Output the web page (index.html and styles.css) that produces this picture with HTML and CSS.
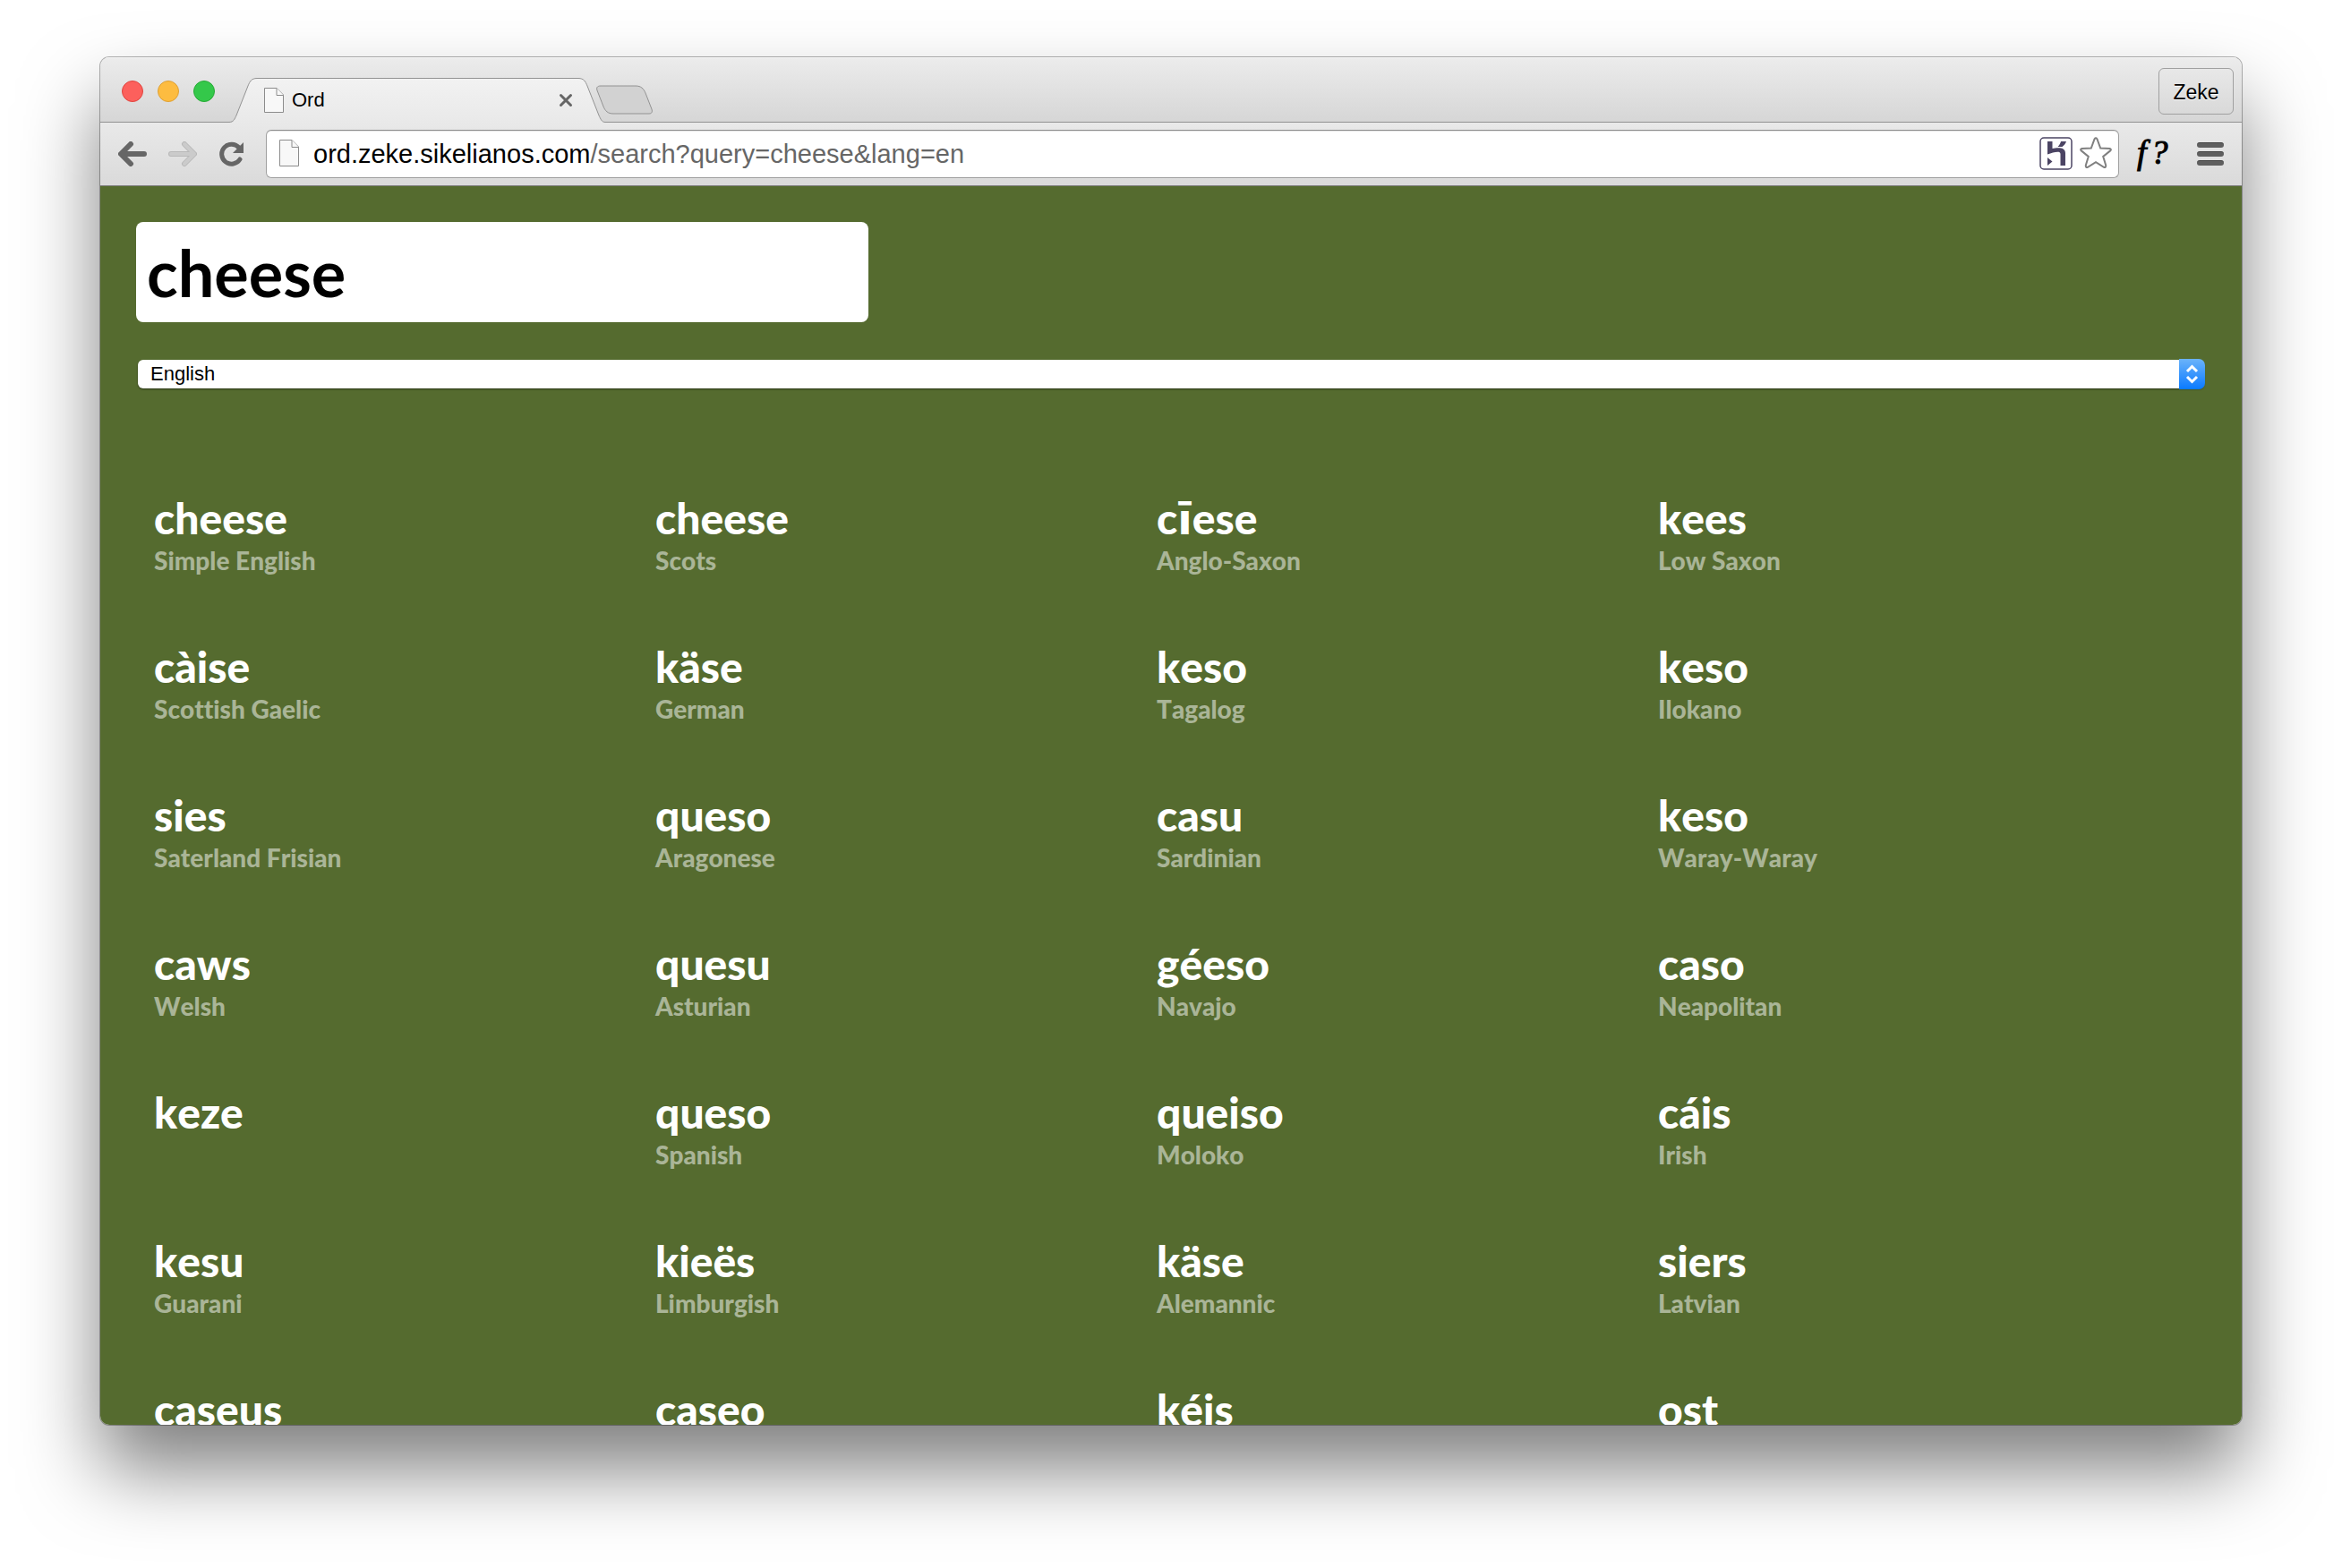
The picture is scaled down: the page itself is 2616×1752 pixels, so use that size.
FILE: index.html
```html
<!DOCTYPE html>
<html lang="en">
<head>
<meta charset="utf-8">
<title>Ord</title>
<link rel="stylesheet" href="styles.css">
</head>
<body>
<div class="window">
  <header class="chrome">
    <div class="tabstrip">
      <div class="lights">
        <button class="light light-close" aria-label="Close window"></button>
        <button class="light light-minimize" aria-label="Minimize window"></button>
        <button class="light light-zoom" aria-label="Zoom window"></button>
      </div>
      <div class="tab">
        <svg class="tab-shape" viewBox="0 0 420 50" aria-hidden="true">
          <defs>
            <linearGradient id="tab-fill" x1="0" y1="0" x2="0" y2="1">
              <stop offset="0" stop-color="#f2f2f2"/>
              <stop offset="1" stop-color="#e9e9e9"/>
            </linearGradient>
          </defs>
          <path fill="url(#tab-fill)" d="M0 50V49.500C5 49.500 6 46 8 42L21 9C23 4 25 .5 31 .5H390C396 .5 398 4 400 9L413 42C415 46 416 49.500 420 49.500V50Z"/>
          <path fill="none" stroke="#929292" d="M0 49.500C5 49.500 6 46 8 42L21 9C23 4 25 .5 31 .5H390C396 .5 398 4 400 9L413 42C415 46 416 49.500 420 49.500"/>
        </svg>
        <svg class="page-icon" viewBox="0 0 22 28" aria-hidden="true"><path d="M.5 .5H14L21.500 8V27.500H.5Z"/><path d="M14 .5V8.500H21.500"/></svg>
        <span class="tab-title">Ord</span>
        <button class="tab-close" aria-label="Close tab"><svg viewBox="0 0 16 16"><path d="M2.500 2.500L13.500 13.500M13.500 2.500L2.500 13.500"/></svg></button>
      </div>
      <button class="new-tab" aria-label="New tab"><svg viewBox="0 0 66 34"><path d="M6 1H45C51 1 54 4 56 9L63 27C64 30 63 32 60 32H20C14 32 11 29 9 24L2 6C1 3 2 1 6 1Z"/></svg></button>
      <button class="profile">Zeke</button>
    </div>
    <div class="toolbar">
      <button class="nav" aria-label="Back"><svg viewBox="0 0 32 28"><path d="M14 3L3 14L14 25M4 14H29" stroke="#666"/></svg></button>
      <button class="nav" aria-label="Forward" disabled><svg viewBox="0 0 32 28"><path d="M18 3L29 14L18 25M28 14H3" stroke="#b9b9b9"/><path d="M18 3L29 14L18 25M28 14H3" stroke="#cbcbcb" stroke-width="4"/></svg></button>
      <button class="nav nav-reload" aria-label="Reload"><svg viewBox="0 0 28 28"><path d="M23 20A11 11 0 1 1 22 7" stroke="#666" stroke-width="5"/><path d="M27 1V13H15Z" fill="#666" stroke="none"/></svg></button>
      <div class="omnibox">
        <svg class="page-icon page-icon-tall" viewBox="0 0 22 30" aria-hidden="true"><path d="M.5 .5H14L21.500 8V29.500H.5Z"/><path d="M14 .5V8.500H21.500"/></svg>
        <a class="url" href="#">ord.zeke.sikelianos.com<span class="url-path">/search?query=cheese&amp;lang=en</span></a>
        <button class="box-button" aria-label="Heroku"><svg class="heroku" viewBox="0 0 37 37"><rect x="1" y="1" width="35" height="35" rx="4" fill="#fff" stroke="#4b4463" stroke-width="1.500"/><path fill="#4b4463" d="M9 5H14.500V13C19 12 29 10.500 29 18V32H23.500V19C23.500 15 16 17 9 19.500ZM9 23L14.500 27.500L9 32ZM24 5H30C29 8 27.500 9.500 25.500 11H20.500C22.500 9 23.500 7 24 5Z"/></svg></button>
        <button class="box-button" aria-label="Bookmark"><svg class="star" viewBox="0 0 36 36"><path d="M16.600 2.200Q18 .2 19.400 2.200L23.200 12.500L33.600 13Q35.800 13.700 34.200 15.400L26.200 21.900L29.200 31.800Q29.400 34.500 27 33.800L18 28.200L9 33.800Q6.600 34.500 6.800 31.800L9.800 21.900L1.800 15.400Q.2 13.700 2.400 13L12.800 12.500Z"/></svg></button>
      </div>
      <button class="extension" aria-label="WhatFont"><i>f</i><i>?</i></button>
      <button class="menu" aria-label="Menu"><span class="bar"></span><span class="bar"></span><span class="bar"></span></button>
    </div>
  </header>
  <main class="page">
    <form class="search">
      <input class="query" type="text" value="cheese" aria-label="Word">
      <div class="language">
        <select class="language-select" aria-label="Language"><option>English</option></select>
        <svg class="language-arrows" viewBox="0 0 29 34" aria-hidden="true"><path d="M9 14L14.500 8.500L20 14M9 20L14.500 25.500L20 20"/></svg>
      </div>
    </form>
    <ul class="words">
      <li><b>cheese</b><span>Simple English</span></li>
      <li><b>cheese</b><span>Scots</span></li>
      <li><b>c<i class="macron">ī</i>ese</b><span>Anglo-Saxon</span></li>
      <li><b>kees</b><span>Low Saxon</span></li>
      <li><b>càise</b><span>Scottish Gaelic</span></li>
      <li><b>käse</b><span>German</span></li>
      <li><b>keso</b><span>Tagalog</span></li>
      <li><b>keso</b><span>Ilokano</span></li>
      <li><b>sies</b><span>Saterland Frisian</span></li>
      <li><b>queso</b><span>Aragonese</span></li>
      <li><b>casu</b><span>Sardinian</span></li>
      <li><b>keso</b><span>Waray-Waray</span></li>
      <li><b>caws</b><span>Welsh</span></li>
      <li><b>quesu</b><span>Asturian</span></li>
      <li><b>géeso</b><span>Navajo</span></li>
      <li><b>caso</b><span>Neapolitan</span></li>
      <li><b>keze</b></li>
      <li><b>queso</b><span>Spanish</span></li>
      <li><b>queiso</b><span>Moloko</span></li>
      <li><b>cáis</b><span>Irish</span></li>
      <li><b>kesu</b><span>Guarani</span></li>
      <li><b>kieës</b><span>Limburgish</span></li>
      <li><b>käse</b><span>Alemannic</span></li>
      <li><b>siers</b><span>Latvian</span></li>
      <li><b>caseus</b></li>
      <li><b>caseo</b></li>
      <li><b>kéis</b></li>
      <li><b>ost</b></li>
    </ul>
  </main>
</div>
</body>
</html>
```
FILE: styles.css
```css
* { box-sizing: border-box; }

body {
  display: flex;
  flex-direction: column;
  height: 100vh;
  margin: 0;
  padding: 64px 112px 160px;
  background: #fff;
  font-family: "Liberation Sans", Arial, sans-serif;
}

button {
  margin: 0;
  padding: 0;
  border: 0;
  background: none;
  color: inherit;
  font: inherit;
}

svg { display: block; }

.window {
  display: flex;
  flex: 1;
  flex-direction: column;
  min-height: 0;
  overflow: hidden;
  border-radius: 10px;
  box-shadow: 0 0 0 1px rgba(0, 0, 0, .3), 0 50px 86px rgba(0, 0, 0, .5);
}

/* Browser frame */
.tabstrip {
  display: flex;
  align-items: flex-end;
  height: 73px;
  padding-right: 9px;
  border-bottom: 1px solid #929292;
  background: linear-gradient(#ececec, #d6d6d6);
  box-shadow: inset 0 1px #f6f6f6;
}

.lights {
  display: flex;
  align-self: center;
  gap: 16px;
  width: 144px;
  padding: 4px 0 0 24px;
}

.light {
  width: 24px;
  height: 24px;
  border: 1px solid #e0443e;
  border-radius: 50%;
  background: #fc605c;
}
.light-minimize { border-color: #dea034; background: #fdbc40; }
.light-zoom { border-color: #27aa35; background: #34c84a; }

.tab {
  position: relative;
  display: flex;
  align-items: center;
  gap: 9px;
  width: 420px;
  height: 50px;
  margin-bottom: -1px;
  padding: 0 36px 0 39px;
}
.tab-shape { position: absolute; inset: 0; width: 100%; height: 100%; }
.page-icon {
  position: relative;
  width: 22px;
  height: 28px;
  fill: #f8f8f8;
  stroke: #8c8c8c;
}
.page-icon-tall { height: 30px; }
.tab-title { position: relative; flex: 1; font-size: 22px; }
.tab-close { position: relative; width: 16px; height: 16px; }
.tab-close path { stroke: #666; stroke-width: 3; stroke-linecap: round; }

.new-tab { width: 66px; height: 34px; margin: 0 auto 7px -11px; position: relative; }
.new-tab path { fill: #d2d2d2; stroke: #929292; }

.profile {
  width: 84px;
  height: 52px;
  margin-bottom: 8px;
  padding-top: 2px;
  border: 1px solid #a0a0a0;
  border-radius: 6px;
  font-size: 23px;
  text-shadow: 0 1px #fff;
}

.toolbar {
  display: flex;
  align-items: center;
  height: 71px;
  padding: 0 20px;
  border-bottom: 1px solid #808080;
  background: linear-gradient(#e9e9e9, #dadada);
}
.nav { width: 32px; height: 28px; margin-right: 24px; }
.nav svg { width: 100%; height: 100%; fill: none; stroke-width: 6; stroke-linecap: round; stroke-linejoin: round; }
.nav-reload { width: 28px; margin-left: 1px; }

.omnibox {
  display: flex;
  flex: 1;
  align-items: center;
  height: 54px;
  padding: 0 7px 2px 14px;
  border: 1px solid #a0a0a0;
  border-top-color: #8c8c8c;
  border-radius: 6px;
  background: #fff;
  box-shadow: inset 0 1px 1px rgba(0, 0, 0, .1);
}
.url { flex: 1; margin-left: 16px; padding-top: 2px; color: #000; font-size: 29px; text-decoration: none; }
.url-path { color: #666; }
.box-button { margin-left: 8px; }
.heroku { width: 37px; height: 37px; }
.star { width: 36px; height: 36px; fill: #fff; stroke: #808080; stroke-width: 2; }

.extension {
  display: flex;
  gap: 5px;
  width: 40px;
  margin-left: 20px;
  padding-bottom: 4px;
  color: #000;
  font-family: "Liberation Serif", serif;
  font-size: 38px;
  line-height: 40px;
  -webkit-text-stroke: 1px #000;
}
.menu { display: flex; flex-direction: column; gap: 4px; width: 30px; margin-left: 27px; }
.bar { height: 6px; border-radius: 3px; border-top: 1px solid #444; background: #5f5f5f; }

/* Search page */
.page {
  flex: 1;
  min-height: 0;
  overflow: hidden;
  padding: 40px;
  background: #556b2f;
  color: #fff;
  font-family: Lato, sans-serif;
}
.query {
  display: block;
  width: 818px;
  max-width: 100%;
  height: 112px;
  padding: 0 12px;
  border: 0;
  border-radius: 8px;
  background: #fff;
  color: #000;
  font: bold 72px Lato, sans-serif;
}
.language {
  position: relative;
  margin: 42px 2px 0;
}
.language-select {
  display: block;
  width: 100%;
  height: 32px;
  padding: 0 14px 2px;
  appearance: none;
  border: 0;
  border-radius: 6px;
  background: #fff;
  box-shadow: 0 1px 2px rgba(0, 0, 0, .5);
  color: #000;
  font: 22px "Liberation Sans", Arial, sans-serif;
}
.language-arrows {
  position: absolute;
  top: -1px;
  right: -1px;
  width: 29px;
  height: 34px;
  border-radius: 0 7px 7px 0;
  background: linear-gradient(#6bb3fa, #0a7aff);
  fill: none;
  stroke: #fff;
  stroke-width: 3;
  pointer-events: none;
}

.words {
  display: grid;
  grid-template-columns: repeat(4, 1fr);
  grid-auto-rows: 166px;
  margin: 116px 0 0;
  padding: 0 52px 0 20px;
  list-style: none;
  font-weight: bold;
  font-kerning: none;
  font-variant-ligatures: none;
}
.words b { display: block; font-size: 48px; line-height: 58px; }
.words span { display: block; font-size: 28px; font-weight: 900; line-height: 36px; color: rgba(255, 255, 255, .5); }
.words .macron { font-family: "DejaVu Sans", sans-serif; font-style: normal; line-height: 1; }
```
